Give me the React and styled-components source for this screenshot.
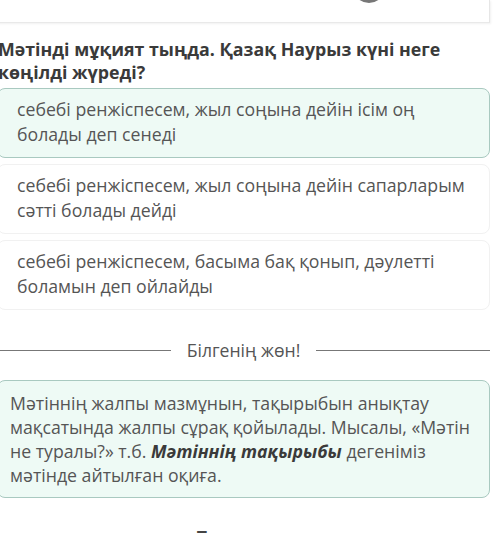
import styled, { createGlobalStyle } from "styled-components";

const Global = createGlobalStyle`
  html, body {
    margin: 0;
    padding: 0;
    background: #ffffff;
    overflow: hidden;
  }
  body {
    font-family: "Open Sans", "Noto Sans", sans-serif;
    color: #555;
  }
`;

const Page = styled.div`
  width: 493px;
  margin-left: -3px;
  display: flex;
  flex-direction: column;
`;

const TopCard = styled.div`
  height: 22px;
  border-right: 1px solid #e6e6e6;
  border-bottom: 1px solid #e9e9e9;
  box-shadow: 1px 1px 2px rgba(0, 0, 0, 0.06);
  display: flex;
  justify-content: flex-end;
  padding-right: 104px;
`;

const Knob = styled.div`
  width: 32px;
  height: 32px;
  border-radius: 50%;
  background: #777;
  margin-top: -29px;
`;

const Question = styled.h2`
  margin: 15px 0 0 0;
  font-size: 17.8px;
  line-height: 23px;
  font-weight: 700;
  color: #3a3a3a;
  padding-left: 1px;
`;

const Options = styled.div`
  margin-top: 4px;
  display: flex;
  flex-direction: column;
  gap: 6px;
`;

const Option = styled.div`
  border-radius: 8px;
  border: 1px solid ${(p) => (p.$picked ? "#a9c9c0" : "#f1f1f1")};
  background: ${(p) => (p.$picked ? "#eefaf5" : "#ffffff")};
  padding: 8px 20px 8px 19px;
  font-size: 17.7px;
  line-height: 25px;
  color: #555;
  min-height: 52px;
`;

const Divider = styled.div`
  margin-top: 28px;
  display: flex;
  align-items: center;
  gap: 16px;
  font-size: 17.6px;
  color: #555;
`;

const Rule = styled.div`
  flex: 1;
  height: 1px;
  background: #777;
`;

const Info = styled.div`
  margin-top: 18px;
  border-radius: 8px;
  border: 1px solid #a9c9c0;
  background: #eefaf5;
  padding: 10px 16px 10px 12px;
  font-size: 17.7px;
  line-height: 24px;
  color: #555;

  b {
    font-style: italic;
    font-weight: 700;
    color: #3a3a3a;
  }
`;

const Next = styled.div`
  margin-top: 27px;
  text-align: center;
  font-size: 17.7px;
  font-weight: 700;
  color: #444;
`;

export default function App() {
  return (
    <Page>
      <Global />
      <TopCard>
        <Knob />
      </TopCard>
      <Question>
        Мәтінді мұқият тыңда. Қазақ Наурыз күні неге көңілді жүреді?
      </Question>
      <Options>
        <Option $picked>
          себебі ренжіспесем, жыл соңына дейін ісім оң болады деп сенеді
        </Option>
        <Option>
          себебі ренжіспесем, жыл соңына дейін сапарларым сәтті болады дейді
        </Option>
        <Option>
          себебі ренжіспесем, басыма бақ қонып, дәулетті боламын деп ойлайды
        </Option>
      </Options>
      <Divider>
        <Rule />
        Білгенің жөн!
        <Rule />
      </Divider>
      <Info>
        Мәтіннің жалпы мазмұнын, тақырыбын анықтау мақсатында жалпы сұрақ
        қойылады. Мысалы, «Мәтін не туралы?» т.б. <b>Мәтіннің тақырыбы</b>{" "}
        дегеніміз мәтінде айтылған оқиға.
      </Info>
      <Next>Тапсырма</Next>
    </Page>
  );
}
